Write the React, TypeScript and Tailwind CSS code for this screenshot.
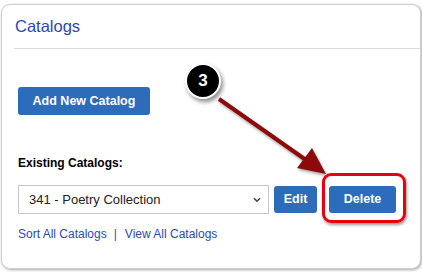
import type { ReactNode } from 'react';

function BlueButton({ children, className }: { children: ReactNode; className?: string }) {
     return (
          <button
               type="button"
               className={`flex items-center justify-center rounded-[3px] bg-[#2d6cbb] font-bold text-white ${className ?? ''}`}
          >
               {children}
          </button>
     );
}

function StepBadge({ n }: { n: number }) {
     return (
          <div className="absolute left-[185px] top-[63px] flex h-[36px] w-[36px] items-center justify-center rounded-full border-2 border-white bg-black text-[17px] font-bold text-white shadow-[2px_3px_4px_rgba(0,0,0,0.45)]">
               {n}
          </div>
     );
}

function Arrow() {
     return (
          <svg
               className="absolute left-0 top-0"
               width="422"
               height="272"
               viewBox="0 0 422 272"
               style={{ filter: 'drop-shadow(1px 2px 1.5px rgba(0,0,0,0.35))' }}
          >
               <line x1="219" y1="99" x2="306" y2="160" stroke="#8c0a0a" strokeWidth="4" />
               <polygon points="326,174 297,168 312,148" fill="#8c0a0a" />
          </svg>
     );
}

export default function App() {
     return (
          <div className="relative h-[272px] w-[422px] overflow-hidden bg-white font-['Liberation_Sans',Arial,sans-serif]">
               <div className="ml-[1px] mt-[4px] h-[265px] w-[420px] rounded-[9px] border border-[#cfcfcf] bg-white shadow-[1px_1px_3px_rgba(0,0,0,0.35)]">
                    {/* header */}
                    <div className="ml-[12px] h-[44px] border-b border-[#dadada] pl-[1px] pt-[12px]">
                         <h2 className="text-[16.5px] leading-[19px] text-[#2b48b0]">Catalogs</h2>
                    </div>

                    <div className="pl-[16px]">
                         <BlueButton className="mt-[38px] h-[28px] w-[132px] text-[12.5px]">Add New Catalog</BlueButton>

                         <div className="mt-[41px] text-[12px] font-bold leading-[14px] text-black">Existing Catalogs:</div>

                         <div className="mt-[15px] flex items-center">
                              <div className="flex h-[29px] w-[251px] items-center justify-between border border-[#c6c6c6] bg-white pl-[10px] pr-[7px] text-[13px] text-[#222]">
                                   <span>341 - Poetry Collection</span>
                                   <svg width="8" height="6" viewBox="0 0 8 6">
                                        <path d="M1 1.2 L4 4.2 L7 1.2" fill="none" stroke="#444" strokeWidth="1.6" />
                                   </svg>
                              </div>
                              <BlueButton className="ml-[5px] h-[27px] w-[43px] text-[12.5px]">Edit</BlueButton>
                              <BlueButton className="ml-[12px] h-[27px] w-[67px] text-[12.5px]">Delete</BlueButton>
                         </div>

                         <div className="mt-[13px] flex text-[12px] leading-[14px] text-[#2c4bb3]">
                              <a href="#">Sort All Catalogs</a>
                              <span className="ml-[7px] mr-[8px]">|</span>
                              <a href="#">View All Catalogs</a>
                         </div>
                    </div>
               </div>

               {/* annotation overlay */}
               <Arrow />
               <StepBadge n={3} />
               <div className="absolute left-[322px] top-[173px] h-[50px] w-[84px] rounded-[9px] border-[3px] border-[#e8000b] shadow-[1px_2px_3px_rgba(0,0,0,0.4)]" />
          </div>
     );
}
